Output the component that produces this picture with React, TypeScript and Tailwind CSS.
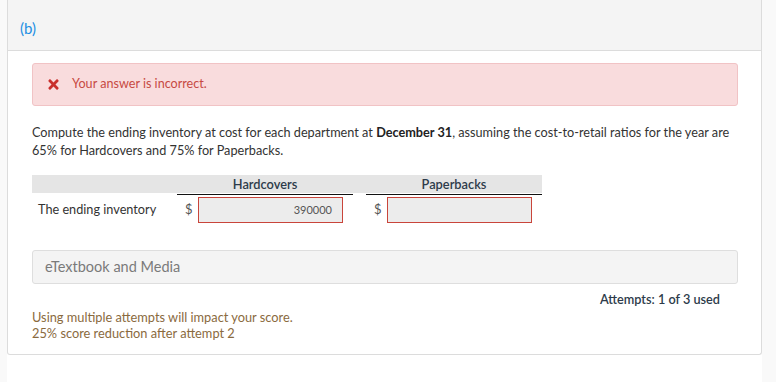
import { FaTimes } from 'react-icons/fa'

const font = { fontFamily: 'Lato, "Open Sans", sans-serif' }

function AmountCell({ value, first }: { value: string; first?: boolean }) {
  return (
    <div className={`flex items-center w-[176px] h-[30px] ${first ? '' : 'ml-[13px]'}`}>
      <span className="w-[21px] pl-[8px] text-[13px] text-[#555]">$</span>
      <div className="w-[145px] h-[26px] border border-[#c9453b] bg-[#ececec] flex items-center justify-end pr-[10px] text-[11px] text-[#555]">
        {value}
      </div>
    </div>
  )
}

export default function App() {
  return (
    <div className="w-[776px] h-[382px] flex bg-[#f9f9f9] overflow-hidden" style={font}>
      <div className="w-[7px] shrink-0" />
      <div className="w-[755px] shrink-0 bg-white">
        <div className="h-[355px] border-x border-b border-[#dcdcdc] rounded-b-[3px] flex flex-col">
          {/* header */}
          <div className="h-[51px] bg-[#f4f4f4] border-b border-[#dcdcdc] pl-[12px] pt-[16px]">
            <span className="text-[15px] text-[#1e8fe3]">(b)</span>
          </div>

          <div className="pl-[24px] pr-[23px] pt-[12px]">
            {/* error alert */}
            <div className="h-[43px] bg-[#f9dcdd] border border-[#f1c3c5] rounded-[3px] flex items-center pl-[13px]">
              <FaTimes size={15} className="text-[#c9302c]" />
              <span className="ml-[11px] text-[12.6px] text-[#c74a43]">Your answer is incorrect.</span>
            </div>

            <p className="mt-[17px] text-[12.7px] leading-[18px] text-[#333]">
              Compute the ending inventory at cost for each department at <b className="font-bold text-[#222]">December 31</b>, assuming the cost-to-retail ratios for the year are 65% for Hardcovers and 75% for Paperbacks.
            </p>

            {/* table */}
            <div className="mt-[16px] w-[510px]">
              <div className="h-[18px] bg-[#e5e5e5] flex">
                <div className="w-[145px]" />
                <div className="w-[176px] text-center text-[12.8px] leading-[18px] font-semibold text-[#2d3b4a] border-b-[1.5px] border-[#111] h-[20px]">Hardcovers</div>
                <div className="w-[13px]" />
                <div className="w-[176px] text-center text-[12.8px] leading-[18px] font-semibold text-[#2d3b4a] border-b-[1.5px] border-[#111] h-[20px]">Paperbacks</div>
              </div>
              <div className="flex items-center mt-[2px]">
                <div className="w-[145px] pl-[6px] text-[12.7px] text-[#333]">The ending inventory</div>
                <AmountCell value="390000" first />
                <AmountCell value="" />
              </div>
            </div>

            {/* eTextbook */}
            <div className="mt-[25px] h-[34px] bg-[#f4f4f4] border border-[#dedede] rounded-[3px] flex items-center pl-[12px] text-[14.5px] text-[#7a7a7a]">
              eTextbook and Media
            </div>

            <div className="flex justify-end pr-[18px] mt-[6px]">
              <span className="text-[12.7px] font-semibold text-[#2d3b4a]">Attempts: 1 of 3 used</span>
            </div>

            <div className="mt-0 text-[12.8px] leading-[16px] text-[#8a6a3e]">
              <p>Using multiple attempts will impact your score.</p>
              <p>25% score reduction after attempt 2</p>
            </div>
          </div>
        </div>
      </div>
      <div className="flex-1" />
    </div>
  )
}
